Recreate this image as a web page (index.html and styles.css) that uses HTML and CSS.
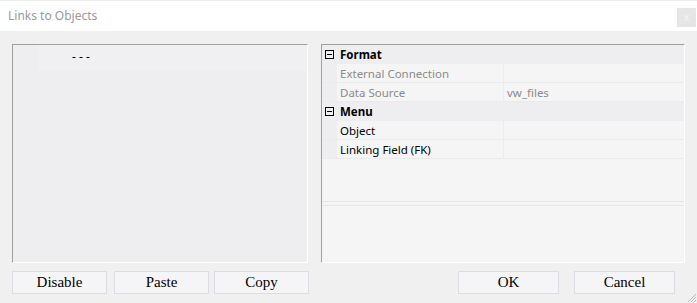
FILE: index.html
```html
<!DOCTYPE html>
<html lang="en">
<head>
    <meta charset="UTF-8">
    <title>Links to Objects</title>
    <link rel="stylesheet" href="styles.css">
</head>
<body>
    <div class="titlebar">
        <span class="title">Links to Objects</span>
        <span class="close">x</span>
    </div>

    <div class="main">
        <div class="panel list-panel">
            <div class="list-head">
                <span class="dashes">- - -</span>
            </div>
        </div>

        <div class="panel grid-panel">
            <div class="grid">
                <div class="row category">
                    <span class="toggle"><svg width="9" height="9" viewBox="0 0 9 9"><rect x="0.5" y="0.5" width="8" height="8" fill="none" stroke="#000"/><path d="M2 4.5h5" stroke="#000"/></svg></span>
                    <span class="cat-name">Format</span>
                </div>
                <div class="row prop muted">
                    <span class="gutter"></span>
                    <span class="name">External Connection</span>
                    <span class="value"></span>
                </div>
                <div class="row prop muted">
                    <span class="gutter"></span>
                    <span class="name">Data Source</span>
                    <span class="value">vw_files</span>
                </div>
                <div class="row category">
                    <span class="toggle"><svg width="9" height="9" viewBox="0 0 9 9"><rect x="0.5" y="0.5" width="8" height="8" fill="none" stroke="#000"/><path d="M2 4.5h5" stroke="#000"/></svg></span>
                    <span class="cat-name">Menu</span>
                </div>
                <div class="row prop">
                    <span class="gutter"></span>
                    <span class="name">Object</span>
                    <span class="value"></span>
                </div>
                <div class="row prop">
                    <span class="gutter"></span>
                    <span class="name">Linking Field (FK)</span>
                    <span class="value"></span>
                </div>
                <div class="grid-fill"></div>
            </div>
            <div class="description"></div>
        </div>
    </div>

    <div class="buttons">
        <div class="left-buttons">
            <button class="btn btn-disable">Disable</button>
            <button class="btn btn-paste">Paste</button>
            <button class="btn btn-copy">Copy</button>
        </div>
        <div class="right-buttons">
            <button class="btn btn-wide">OK</button>
            <button class="btn btn-wide">Cancel</button>
        </div>
    </div>

    <svg class="grip" width="12" height="12" viewBox="0 0 12 12">
        <path d="M11 3L3 11M11 6L6 11M11 9L9 11" stroke="#b8b8b8" stroke-width="1"/>
    </svg>
</body>
</html>
```

FILE: styles.css
```css
body {
    margin: 0;
    padding: 0;
    width: 697px;
    height: 303px;
    background-color: #f0f0f0;
    font-family: "Noto Sans", Arial, sans-serif;
    font-size: 11.5px;
    position: relative;
    overflow: hidden;
}

.titlebar {
    height: 30px;
    background: #fff;
    border-top: 1px solid #ececec;
    display: flex;
    align-items: center;
    justify-content: space-between;
}

.title {
    margin-left: 8px;
    margin-top: -2px;
    color: #9a9a9a;
    font-size: 12px;
}

.close {
    width: 19px;
    height: 19px;
    margin-right: 1px;
    margin-top: 2px;
    background: #e6e6e6;
    color: #f4f4f4;
    font-size: 11px;
    line-height: 18px;
    text-align: center;
}

.main {
    display: flex;
    gap: 13px;
    padding: 13px 0 0 12px;
}

.panel {
    height: 217px;
    border-top: 1px solid #a0a0a0;
    border-left: 1px solid #a0a0a0;
    border-right: 1px solid #fff;
    border-bottom: 1px solid #fff;
}

.list-panel {
    width: 294px;
    background: #eeeef0;
}

.list-head {
    height: 25px;
    margin-left: 25px;
    background: #f0f0f2;
}

.dashes {
    display: inline-block;
    margin-left: 34px;
    margin-top: 3px;
    color: #000;
    font-size: 12px;
}

.grid-panel {
    width: 362px;
    background: #f5f5f5;
    display: flex;
    flex-direction: column;
}

.grid {
    height: 156px;
    display: flex;
    flex-direction: column;
    border-bottom: 1px solid #e6e6e6;
}

.row {
    height: 18px;
    display: flex;
    align-items: center;
    border-bottom: 1px solid #ebebeb;
}

.category {
    background: #eeeef0;
    border-bottom-color: #eeeef0;
}

.toggle {
    width: 9px;
    height: 9px;
    margin-left: 3px;
    margin-right: 6px;
    display: flex;
}

.cat-name {
    font-weight: bold;
    color: #000;
}

.gutter {
    width: 15px;
    align-self: stretch;
    background: #eeeef0;
}

.name {
    width: 163px;
    padding-left: 3px;
    align-self: stretch;
    display: flex;
    align-items: center;
    border-right: 1px solid #ebebeb;
    color: #000;
}

.value {
    padding-left: 3px;
    color: #000;
}

.muted .name,
.muted .value {
    color: #8a8a8a;
}

.grid-fill {
    flex: 1;
}

.description {
    flex: 1;
    margin-top: 3px;
    border-top: 1px solid #e6e6e6;
}

.buttons {
    display: flex;
    justify-content: space-between;
    padding: 8px 0 0 12px;
}

.left-buttons,
.right-buttons {
    display: flex;
}

.btn {
    height: 23px;
    padding: 0;
    background: #f5f5f7;
    border: 1px solid #dcdce4;
    font-family: "Liberation Serif", "Times New Roman", serif;
    font-size: 15px;
    color: #000;
}

.btn-disable,
.btn-paste,
.btn-copy {
    width: 95px;
}

.btn-paste {
    margin-left: 7px;
}

.btn-copy {
    margin-left: 5px;
}

.btn-wide {
    width: 101px;
    margin-right: 15px;
}

.right-buttons .btn-wide:last-child {
    margin-right: 22px;
}

.grip {
    position: absolute;
    right: 0;
    bottom: 0;
}
```
